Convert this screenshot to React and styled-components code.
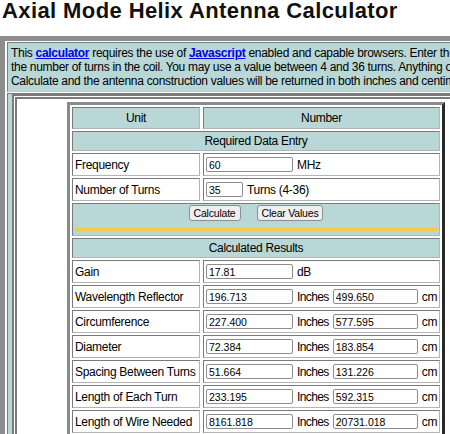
import React from "react";
import styled, { createGlobalStyle } from "styled-components";

const Global = createGlobalStyle`
  html, body { margin: 0; padding: 0; background: #fff; overflow: hidden; }
  body { font-family: "Liberation Sans", Arial, sans-serif; color: #000; }
`;

const TEAL = "#b8d7d6";

const Page = styled.div`
  width: 720px;
`;

const Title = styled.h1`
  margin: 0 0 14px 0;
  padding-left: 2px;
  font-size: 22px;
  line-height: 22px;
  font-weight: bold;
  letter-spacing: 0.4px;
  color: #111;
  white-space: nowrap;
`;

const Frame = styled.div`
  border-style: solid;
  border-width: 5px 0 0 5px;
  border-color: #8c8c8c;
  padding: 1px 0 0 2px;
  display: flex;
  flex-direction: column;
  gap: 1px;
`;

const FrameCell = styled.div`
  background: ${TEAL};
  border: 1px solid;
  border-color: #7c7c7c #c8c8c8 #c8c8c8 #7c7c7c;
  border-right: none;
  padding: ${(p) => p.$pad};
`;

const Intro = styled.p`
  margin: 0;
  font-size: 12px;
  line-height: 14px;
  letter-spacing: -0.3px;
  white-space: nowrap;
`;

const Link = styled.a`
  color: #0000ee;
  font-weight: bold;
  text-decoration: underline;
`;

const WhiteBox = styled.div`
  background: #fff;
  border: 5px double #7a7a7a;
  border-right: none;
  padding: 3px 0 0 50px;
  height: 400px;
`;

const Table = styled.div`
  display: grid;
  grid-template-columns: 128px 237px;
  column-gap: 3px;
  row-gap: 2px;
  width: fit-content;
  border-style: solid;
  border-width: 3px;
  border-color: #8a8a8a #2a2a2a #2a2a2a #8a8a8a;
  padding: 2px;
  background: #fff;
`;

const Cell = styled.div`
  box-sizing: border-box;
  height: ${(p) => p.$h || 23}px;
  grid-column: ${(p) => (p.$span ? "1 / -1" : "auto")};
  background: ${(p) => (p.$head ? TEAL : "#fff")};
  border: 1px solid;
  border-color: #7a7a7a #b4b4b4 #b4b4b4 #7a7a7a;
  display: flex;
  align-items: center;
  justify-content: ${(p) => (p.$center ? "center" : "flex-start")};
  gap: 4px;
  padding: 0 2px;
  font-size: 12px;
  letter-spacing: -0.3px;
  white-space: nowrap;
`;

const Unit = styled.span`
  letter-spacing: -0.6px;
`;

const Field = styled.input`
  box-sizing: border-box;
  width: ${(p) => p.$w || 87}px;
  height: 15px;
  margin: 0;
  padding: 0 2px;
  border: 1px solid #8d8d8d;
  border-radius: 2px;
  background: #fff;
  font-family: "Liberation Sans", Arial, sans-serif;
  font-size: 10.5px;
  color: #000;
  outline: none;
`;

const ButtonCell = styled.div`
  box-sizing: border-box;
  grid-column: 1 / -1;
  height: 33px;
  background: ${TEAL};
  border: 1px solid;
  border-color: #7a7a7a #b4b4b4 #b4b4b4 #7a7a7a;
  padding: 1px 2px 0;
  display: flex;
  flex-direction: column;
  gap: 7px;
`;

const ButtonRow = styled.div`
  display: flex;
  justify-content: center;
  gap: 16px;
`;

const Button = styled.button`
  box-sizing: border-box;
  height: 16px;
  margin: 0;
  padding: 0 4px;
  border: 1px solid #8d8d8d;
  border-radius: 3px;
  background: #efefef;
  font-family: "Liberation Sans", Arial, sans-serif;
  font-size: 10.5px;
  letter-spacing: -0.2px;
  color: #000;
`;

const Rule = styled.div`
  height: 3px;
  background: #f9c843;
`;

const results = [
  ["Wavelength Reflector", "196.713", "499.650"],
  ["Circumference", "227.400", "577.595"],
  ["Diameter", "72.384", "183.854"],
  ["Spacing Between Turns", "51.664", "131.226"],
  ["Length of Each Turn", "233.195", "592.315"],
  ["Length of Wire Needed", "8161.818", "20731.018"],
];

export default function App() {
  return (
    <Page>
      <Global />
      <Title>Axial Mode Helix Antenna Calculator</Title>
      <Frame>
        <FrameCell $pad="3px 3px 3px 3px">
          <Intro>
            This <Link href="#">calculator</Link> requires the use of{" "}
            <Link href="#">Javascript</Link> enabled and capable browsers. Enter the frequency in MHz and
            <br />
            the number of turns in the coil. You may use a value between 4 and 36 turns. Anything over 36 is not
            <br />
            Calculate and the antenna construction values will be returned in both inches and centimeters.
          </Intro>
        </FrameCell>
        <FrameCell $pad="0 0 0 4px">
          <WhiteBox>
            <Table>
              <Cell $head $center $h={22}>Unit</Cell>
              <Cell $head $center $h={22}>Number</Cell>
              <Cell $head $center $span $h={20}>Required Data Entry</Cell>
              <Cell>Frequency</Cell>
              <Cell>
                <Field readOnly value="60" />
                MHz
              </Cell>
              <Cell>Number of Turns</Cell>
              <Cell>
                <Field readOnly value="35" $w={37} />
                Turns (4-36)
              </Cell>
              <ButtonCell>
                <ButtonRow>
                  <Button>Calculate</Button>
                  <Button>Clear Values</Button>
                </ButtonRow>
                <Rule />
              </ButtonCell>
              <Cell $head $center $span $h={20}>Calculated Results</Cell>
              <Cell>Gain</Cell>
              <Cell>
                <Field readOnly value="17.81" />
                dB
              </Cell>
              {results.map(([label, inch, cm]) => (
                <React.Fragment key={label}>
                  <Cell>{label}</Cell>
                  <Cell>
                    <Field readOnly value={inch} />
                    <Unit>Inches</Unit>
                    <Field readOnly value={cm} $w={85} />
                    cm
                  </Cell>
                </React.Fragment>
              ))}
            </Table>
          </WhiteBox>
        </FrameCell>
      </Frame>
    </Page>
  );
}
